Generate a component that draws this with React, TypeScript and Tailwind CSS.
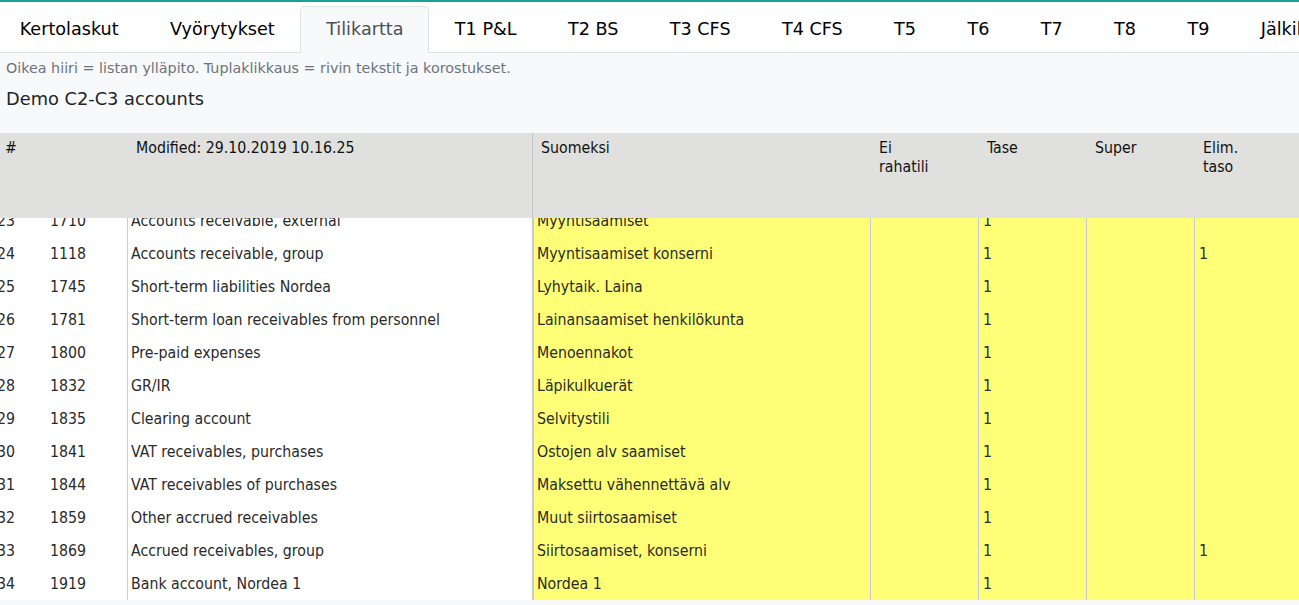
import React from "react";

const tabs = [
  "Kertolaskut",
  "Vyörytykset",
  "Tilikartta",
  "T1 P&L",
  "T2 BS",
  "T3 CFS",
  "T4 CFS",
  "T5",
  "T6",
  "T7",
  "T8",
  "T9",
  "Jälkikirjaukset",
];

type Row = {
  n: string;
  acc: string;
  name: string;
  fi: string;
  ei: string;
  tase: string;
  sup: string;
  elim: string;
};

const rows: Row[] = [
  { n: "23", acc: "1710", name: "Accounts receivable, external", fi: "Myyntisaamiset", ei: "", tase: "1", sup: "", elim: "" },
  { n: "24", acc: "1118", name: "Accounts receivable, group", fi: "Myyntisaamiset konserni", ei: "", tase: "1", sup: "", elim: "1" },
  { n: "25", acc: "1745", name: "Short-term liabilities Nordea", fi: "Lyhytaik. Laina", ei: "", tase: "1", sup: "", elim: "" },
  { n: "26", acc: "1781", name: "Short-term loan receivables from personnel", fi: "Lainansaamiset henkilökunta", ei: "", tase: "1", sup: "", elim: "" },
  { n: "27", acc: "1800", name: "Pre-paid expenses", fi: "Menoennakot", ei: "", tase: "1", sup: "", elim: "" },
  { n: "28", acc: "1832", name: "GR/IR", fi: "Läpikulkuerät", ei: "", tase: "1", sup: "", elim: "" },
  { n: "29", acc: "1835", name: "Clearing account", fi: "Selvitystili", ei: "", tase: "1", sup: "", elim: "" },
  { n: "30", acc: "1841", name: "VAT receivables, purchases", fi: "Ostojen alv saamiset", ei: "", tase: "1", sup: "", elim: "" },
  { n: "31", acc: "1844", name: "VAT receivables of purchases", fi: "Maksettu vähennettävä alv", ei: "", tase: "1", sup: "", elim: "" },
  { n: "32", acc: "1859", name: "Other accrued receivables", fi: "Muut siirtosaamiset", ei: "", tase: "1", sup: "", elim: "" },
  { n: "33", acc: "1869", name: "Accrued receivables, group", fi: "Siirtosaamiset, konserni", ei: "", tase: "1", sup: "", elim: "1" },
  { n: "34", acc: "1919", name: "Bank account, Nordea 1", fi: "Nordea 1", ei: "", tase: "1", sup: "", elim: "" },
];

export default function App() {
  return (
    <div className="w-[1299px] h-[605px] overflow-hidden bg-[#f8f9fa] font-['DejaVu_Sans',sans-serif]">
      <div className="h-[2px] bg-[#17a398]" />
      <nav className="h-[51px] bg-white border-b border-[#dee2e6] flex items-end">
        <div className="flex -ml-[6px] -mb-px whitespace-nowrap">
          {tabs.map((t) => {
            const active = t === "Tilikartta";
            return (
              <div
                key={t}
                className={
                  active
                    ? "shrink-0 h-[47px] px-[24.7px] flex items-center border border-[#dee2e6] border-b-[#f8f9fa] rounded-t-[5px] bg-[#f8f9fa] text-[#495057] text-[17.6px]"
                    : "shrink-0 h-[47px] px-[24.7px] flex items-center border border-transparent text-black text-[17.6px]"
                }
              >
                {t}
              </div>
            );
          })}
        </div>
      </nav>
      <div className="h-[80px] px-[6px]">
        <div className="pt-[5px] h-[25px] leading-[20px] text-[14.3px] text-[#6c757d]">
          Oikea hiiri = listan ylläpito. Tuplaklikkaus = rivin tekstit ja korostukset.
        </div>
        <div className="mt-[9px] leading-[24px] text-[17.8px] text-[#212529]">Demo C2-C3 accounts</div>
      </div>
      <div className="font-['DejaVu_Sans_Condensed','DejaVu_Sans',sans-serif] text-[15.75px]">
        <div className="h-[85px] bg-[#e0e0de] flex text-[#111] leading-[19px]">
          <div className="w-[45px] shrink-0 pl-[5px] pt-[5px]">#</div>
          <div className="w-[82px] shrink-0" />
          <div className="w-[405px] shrink-0 pl-[9px] pt-[5px]">Modified: 29.10.2019 10.16.25</div>
          <div className="w-[338px] shrink-0 border-l border-[#c4c4c4] pl-[8px] pt-[5px]">Suomeksi</div>
          <div className="w-[108px] shrink-0 pl-[9px] pt-[5px]">
            Ei
            <br />
            rahatili
          </div>
          <div className="w-[108px] shrink-0 pl-[9px] pt-[5px]">Tase</div>
          <div className="w-[108px] shrink-0 pl-[9px] pt-[5px]">Super</div>
          <div className="flex-1 pl-[9px] pt-[5px]">
            Elim.
            <br />
            taso
          </div>
        </div>
        <div className="h-[382px] overflow-hidden">
          <div className="-mt-[14px]">
            {rows.map((r) => (
              <div key={r.n} className="h-[33px] flex text-[#2a2a2a]">
                <div className="w-[45px] shrink-0 bg-white flex items-center">
                  <span className="-ml-[3px]">{r.n}</span>
                </div>
                <div className="w-[82px] shrink-0 bg-white flex items-center pl-[5px]">{r.acc}</div>
                <div className="w-[405px] shrink-0 bg-white border-l border-[#cccccc] flex items-center pl-[3px] whitespace-nowrap">
                  {r.name}
                </div>
                <div className="w-[338px] shrink-0 bg-[#ffff77] border-l-2 border-[#c9c9dd] flex items-center pl-[3px] whitespace-nowrap">
                  {r.fi}
                </div>
                <div className="w-[108px] shrink-0 bg-[#ffff77] border-l border-[#c9c9dd] flex items-center pl-[4px]">{r.ei}</div>
                <div className="w-[108px] shrink-0 bg-[#ffff77] border-l border-[#c9c9dd] flex items-center pl-[4px]">{r.tase}</div>
                <div className="w-[108px] shrink-0 bg-[#ffff77] border-l border-[#c9c9dd] flex items-center pl-[4px]">{r.sup}</div>
                <div className="flex-1 bg-[#ffff77] border-l border-[#c9c9dd] flex items-center pl-[4px]">{r.elim}</div>
              </div>
            ))}
          </div>
        </div>
      </div>
    </div>
  );
}
